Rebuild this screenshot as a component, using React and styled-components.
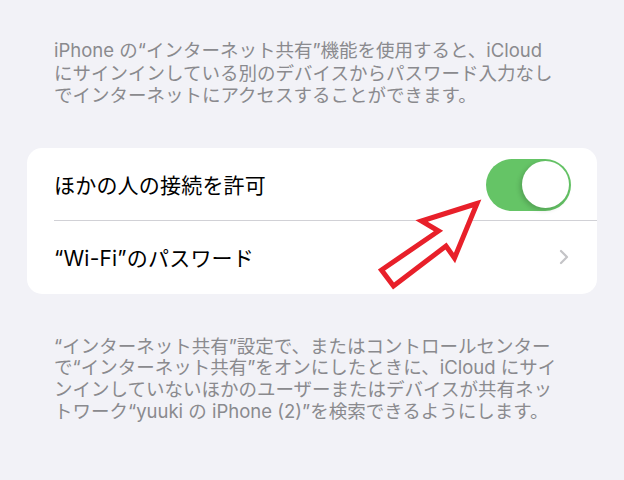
import React from "react"
import styled, { createGlobalStyle } from "styled-components"

const GlobalStyle = createGlobalStyle`
  html, body {
    margin: 0;
    padding: 0;
    background: #f2f2f7;
  }
  body {
    font-family: "Inter", "Noto Sans CJK JP", sans-serif;
    -webkit-font-smoothing: antialiased;
  }
`

const Page = styled.div`
  position: relative;
  width: 624px;
  height: 480px;
  overflow: hidden;
  background: #f2f2f7;
  padding-top: 39px;
  box-sizing: border-box;
`

const Note = styled.div`
  padding-left: 54px;
  color: #8a8a8e;
  font-size: 18.5px;
  line-height: ${(p) => p.$lh || "22.5px"};
  margin-bottom: ${(p) => p.$mb || "0"};
  div {
    white-space: nowrap;
  }
`

const Card = styled.div`
  margin: 0 27px 42px;
  background: #ffffff;
  border-radius: 15px;
  overflow: hidden;
`

const Row = styled.div`
  height: 73px;
  box-sizing: border-box;
  margin-left: 27px;
  padding-right: ${(p) => p.$pr || "26px"};
  display: flex;
  align-items: center;
  justify-content: space-between;
  border-bottom: ${(p) => (p.$divider ? "1px solid #d1d1d6" : "none")};
`

const Label = styled.span`
  font-size: 21px;
  color: #000000;
  letter-spacing: 0.2px;
`

const Toggle = styled.div`
  width: 85px;
  height: 52px;
  border-radius: 26px;
  background: #65c466;
  position: relative;
  margin-top: 2px;
  &::after {
    content: "";
    position: absolute;
    top: 2.5px;
    right: 2.5px;
    width: 47px;
    height: 47px;
    border-radius: 50%;
    background: #ffffff;
    box-shadow: -2px 2px 5px rgba(0, 0, 0, 0.18);
  }
`

const Chevron = () => (
  <svg width="10" height="16" viewBox="0 0 10 16">
    <path
      d="M2 2 L8 8 L2 14"
      fill="none"
      stroke="#c4c4c7"
      strokeWidth="2.2"
      strokeLinecap="round"
      strokeLinejoin="round"
    />
  </svg>
)

const Annotation = styled.svg`
  position: absolute;
  left: 0;
  top: 0;
  pointer-events: none;
`

const Arrow = () => (
  <Annotation width="624" height="480" viewBox="0 0 624 480">
    <polygon
      points="477,203.5 421.5,221 438.5,231 381.5,270 393.5,286 446,246 454.5,258"
      fill="#ffffff"
      stroke="#e8202a"
      strokeWidth="5"
      strokeLinejoin="miter"
    />
  </Annotation>
)

export default function App() {
  return (
    <>
      <GlobalStyle />
      <Page>
        <Note $mb="41px">
          <div>iPhone の“インターネット共有”機能を使用すると、iCloud</div>
          <div>にサインインしている別のデバイスからパスワード入力なし</div>
          <div>でインターネットにアクセスすることができます。</div>
        </Note>

        <Card>
          <Row $divider>
            <Label>ほかの人の接続を許可</Label>
            <Toggle />
          </Row>
          <Row $pr="28px">
            <Label>“Wi-Fi”のパスワード</Label>
            <Chevron />
          </Row>
        </Card>

        <Note $lh="21.7px">
          <div>“インターネット共有”設定で、またはコントロールセンター</div>
          <div>で“インターネット共有”をオンにしたときに、iCloud にサイ</div>
          <div>ンインしていないほかのユーザーまたはデバイスが共有ネッ</div>
          <div>トワーク“yuuki の iPhone (2)”を検索できるようにします。</div>
        </Note>

        <Arrow />
      </Page>
    </>
  )
}
